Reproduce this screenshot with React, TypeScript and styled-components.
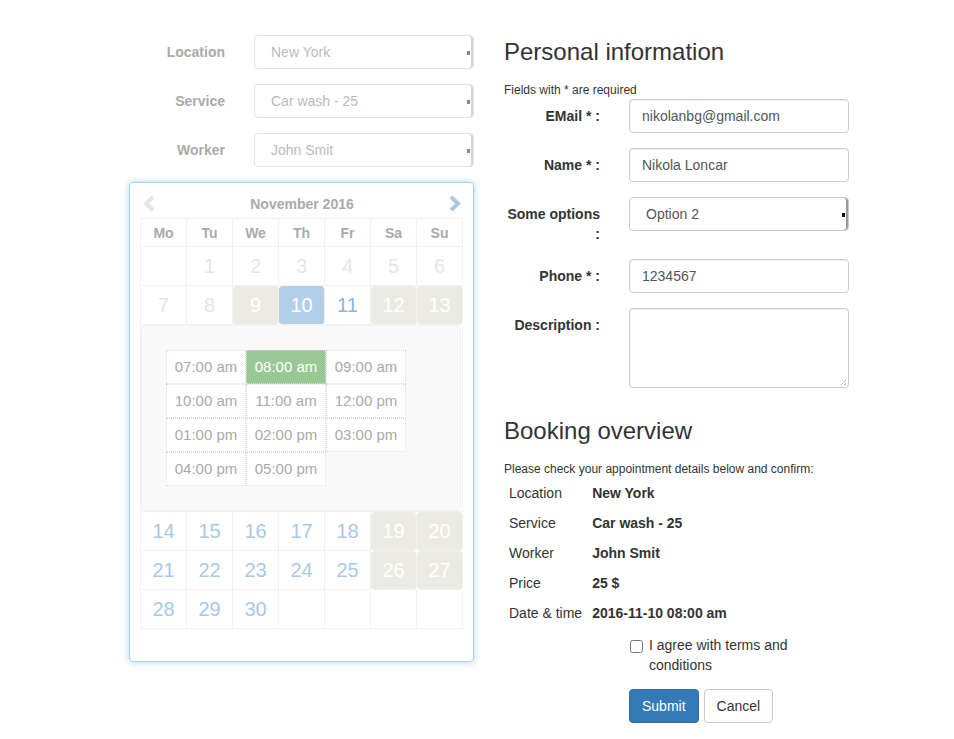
import React from 'react'
import styled, { createGlobalStyle } from 'styled-components'

const GlobalStyle = createGlobalStyle`
    body {
        margin: 0;
        background: #fff;
        font-family: "Liberation Sans", Arial, sans-serif;
        font-size: 14px;
        line-height: 20px;
        color: #333;
    }
`

const Page = styled.div`
    display: flex;
    gap: 30px;
    padding: 35px 0 0 129px;
`

const LeftColumn = styled.div`
    width: 345px;
    display: flex;
    flex-direction: column;
`

const RightColumn = styled.div`
    width: 345px;
    display: flex;
    flex-direction: column;
    align-items: flex-start;
`

const FieldRow = styled.div`
    display: grid;
    grid-template-columns: 96px 220px;
    column-gap: 29px;
    margin-bottom: 15px;
`

const FieldLabel = styled.label<{ $muted?: boolean }>`
    text-align: right;
    font-weight: bold;
    padding-top: 7px;
    color: ${({ $muted }) => ($muted ? '#aaa' : '#333')};
`

const SelectBox = styled.div<{ $muted?: boolean }>`
    position: relative;
    height: 34px;
    box-sizing: border-box;
    border: 1px solid ${({ $muted }) => ($muted ? '#e2e2e2' : '#ccc')};
    border-radius: 4px;
    padding: 6px 16px;
    color: ${({ $muted }) => ($muted ? '#bbb' : '#555')};
    box-shadow: inset -2px 0 0 ${({ $muted }) => ($muted ? '#d6d6d6' : '#999')};
    &::after {
        content: '';
        position: absolute;
        right: 3px;
        top: 15px;
        width: 3px;
        height: 4px;
        background: ${({ $muted }) => ($muted ? '#888' : '#111')};
    }
`

const TextInput = styled.div`
    height: 34px;
    box-sizing: border-box;
    border: 1px solid #ccc;
    border-radius: 4px;
    padding: 6px 12px;
    color: #555;
    box-shadow: inset 0 1px 1px rgba(0, 0, 0, 0.075);
`

const TextArea = styled.div`
    position: relative;
    height: 80px;
    box-sizing: border-box;
    border: 1px solid #ccc;
    border-radius: 4px;
    box-shadow: inset 0 1px 1px rgba(0, 0, 0, 0.075);
    &::after {
        content: '';
        position: absolute;
        right: 2px;
        bottom: 2px;
        width: 5px;
        height: 5px;
        background: linear-gradient(135deg, transparent 45%, #bbb 45%, #bbb 55%, transparent 55%, transparent 75%, #bbb 75%);
    }
`

const Calendar = styled.div`
    border: 1px solid #a9d1f3;
    border-radius: 4px;
    box-shadow: 0 0 7px rgba(102, 175, 233, 0.55);
    padding: 6px 10px 32px 10px;
`

const CalHeader = styled.div`
    height: 29px;
    display: flex;
    align-items: center;
    justify-content: space-between;
    padding: 0 1px 0 2px;
`

const CalTitle = styled.div`
    font-weight: bold;
    color: #aaa;
`

const DayGrid = styled.div`
    display: grid;
    grid-template-columns: repeat(7, 46px);
    border-top: 1px solid #f1f1f1;
    border-left: 1px solid #f1f1f1;
`

const DayName = styled.div`
    height: 28px;
    box-sizing: border-box;
    border-right: 1px solid #f1f1f1;
    border-bottom: 1px solid #f1f1f1;
    display: flex;
    align-items: center;
    justify-content: center;
    font-weight: bold;
    color: #aaa;
`

type DayKind = 'past' | 'off' | 'today' | 'next' | 'open' | 'empty'

const dayColors: Record<DayKind, { bg: string; fg: string }> = {
    past: { bg: 'transparent', fg: '#e6e6e6' },
    off: { bg: '#ecebe3', fg: '#fff' },
    today: { bg: '#b2cfea', fg: '#fff' },
    next: { bg: 'transparent', fg: '#8db5de' },
    open: { bg: 'transparent', fg: '#a9c9e8' },
    empty: { bg: 'transparent', fg: 'transparent' },
}

const DayCell = styled.div<{ $kind: DayKind }>`
    height: 39px;
    box-sizing: border-box;
    border-right: 1px solid #f1f1f1;
    border-bottom: 1px solid #f1f1f1;
    display: flex;
    align-items: center;
    justify-content: center;
    font-size: 20px;
    background: ${({ $kind }) => dayColors[$kind].bg};
    color: ${({ $kind }) => dayColors[$kind].fg};
    border-radius: ${({ $kind }) => ($kind === 'off' || $kind === 'today' ? '4px' : '0')};
`

const TimePanel = styled.div`
    grid-column: 1 / -1;
    border-right: 1px solid #f1f1f1;
    border-bottom: 1px solid #f1f1f1;
    padding: 0 1px 0 0;
`

const TimeBox = styled.div`
    height: 186px;
    box-sizing: border-box;
    background: #f9f9f9;
    border: 1px solid #f2f2f2;
    border-radius: 5px;
    padding: 24px 23px 24px 24px;
`

const TimeGrid = styled.div`
    display: grid;
    grid-template-columns: repeat(3, 80px);
`

const TimeSlot = styled.div<{ $active?: boolean }>`
    height: 34px;
    box-sizing: border-box;
    border: 1px dotted #dcdcdc;
    display: flex;
    align-items: center;
    justify-content: center;
    font-size: 15px;
    background: ${({ $active }) => ($active ? '#98c994' : '#fff')};
    color: ${({ $active }) => ($active ? '#fff' : '#aaa')};
`

const Heading = styled.h3`
    margin: 4px 0 17px;
    font-size: 24px;
    font-weight: normal;
    line-height: 26px;
    color: #333;
`

const SectionHeading = styled(Heading)`
    margin-top: 15px;
`

const SmallNote = styled.div`
    font-size: 12px;
    line-height: 17px;
`

const Overview = styled.table`
    border-collapse: collapse;
    td {
        padding: 5px;
        line-height: 20px;
        white-space: nowrap;
    }
    td + td {
        font-weight: bold;
    }
`

const AgreeRow = styled.label`
    display: flex;
    gap: 6px;
    margin: 7px 0 0 126px;
    width: 200px;
    input {
        margin: 5px 0 0 0;
        width: 13px;
        height: 13px;
        flex: none;
    }
`

const Actions = styled.div`
    display: flex;
    gap: 5px;
    margin: 14px 0 0 125px;
`

const Button = styled.button<{ $primary?: boolean }>`
    font-family: inherit;
    font-size: 14px;
    line-height: 20px;
    padding: 6px 12px;
    border-radius: 4px;
    border: 1px solid ${({ $primary }) => ($primary ? '#2e6da4' : '#ccc')};
    background: ${({ $primary }) => ($primary ? '#337ab7' : '#fff')};
    color: ${({ $primary }) => ($primary ? '#fff' : '#333')};
`

function Chevron({ dir, color }: { dir: 'left' | 'right'; color: string }) {
    const points = dir === 'left' ? '11,3 4,9.5 11,16' : '3,3 10,9.5 3,16'
    return (
        <svg width="14" height="19" viewBox="0 0 14 19">
            <polyline points={points} fill="none" stroke={color} strokeWidth="4" />
        </svg>
    )
}

const weekDays = ['Mo', 'Tu', 'We', 'Th', 'Fr', 'Sa', 'Su']

const topWeeks: [string, DayKind][][] = [
    [['', 'empty'], ['1', 'past'], ['2', 'past'], ['3', 'past'], ['4', 'past'], ['5', 'past'], ['6', 'past']],
    [['7', 'past'], ['8', 'past'], ['9', 'off'], ['10', 'today'], ['11', 'next'], ['12', 'off'], ['13', 'off']],
]

const bottomWeeks: [string, DayKind][][] = [
    [['14', 'open'], ['15', 'open'], ['16', 'open'], ['17', 'open'], ['18', 'open'], ['19', 'off'], ['20', 'off']],
    [['21', 'open'], ['22', 'open'], ['23', 'open'], ['24', 'open'], ['25', 'open'], ['26', 'off'], ['27', 'off']],
    [['28', 'open'], ['29', 'open'], ['30', 'open'], ['', 'empty'], ['', 'empty'], ['', 'empty'], ['', 'empty']],
]

const times = [
    '07:00 am', '08:00 am', '09:00 am',
    '10:00 am', '11:00 am', '12:00 pm',
    '01:00 pm', '02:00 pm', '03:00 pm',
    '04:00 pm', '05:00 pm',
]

const overview = [
    ['Location', 'New York'],
    ['Service', 'Car wash - 25'],
    ['Worker', 'John Smit'],
    ['Price', '25 $'],
    ['Date & time', '2016-11-10 08:00 am'],
]

function renderWeeks(weeks: [string, DayKind][][], key: string) {
    return weeks.flatMap((week, w) =>
        week.map(([label, kind], d) => (
            <DayCell key={`${key}-${w}-${d}`} $kind={kind}>
                {label}
            </DayCell>
        ))
    )
}

export default function App() {
    return (
        <>
            <GlobalStyle />
            <Page>
                <LeftColumn>
                    <FieldRow>
                        <FieldLabel $muted>Location</FieldLabel>
                        <SelectBox $muted>New York</SelectBox>
                    </FieldRow>
                    <FieldRow>
                        <FieldLabel $muted>Service</FieldLabel>
                        <SelectBox $muted>Car wash - 25</SelectBox>
                    </FieldRow>
                    <FieldRow>
                        <FieldLabel $muted>Worker</FieldLabel>
                        <SelectBox $muted>John Smit</SelectBox>
                    </FieldRow>

                    <Calendar>
                        <CalHeader>
                            <Chevron dir="left" color="#e6e6e6" />
                            <CalTitle>November 2016</CalTitle>
                            <Chevron dir="right" color="#a9c9e8" />
                        </CalHeader>
                        <DayGrid>
                            {weekDays.map(d => (
                                <DayName key={d}>{d}</DayName>
                            ))}
                            {renderWeeks(topWeeks, 'top')}
                            <TimePanel>
                                <TimeBox>
                                    <TimeGrid>
                                        {times.map(t => (
                                            <TimeSlot key={t} $active={t === '08:00 am'}>
                                                {t}
                                            </TimeSlot>
                                        ))}
                                    </TimeGrid>
                                </TimeBox>
                            </TimePanel>
                            {renderWeeks(bottomWeeks, 'bottom')}
                        </DayGrid>
                    </Calendar>
                </LeftColumn>

                <RightColumn>
                    <Heading>Personal information</Heading>
                    <SmallNote>Fields with * are required</SmallNote>
                    <FieldRow>
                        <FieldLabel>EMail * :</FieldLabel>
                        <TextInput>nikolanbg@gmail.com</TextInput>
                    </FieldRow>
                    <FieldRow>
                        <FieldLabel>Name * :</FieldLabel>
                        <TextInput>Nikola Loncar</TextInput>
                    </FieldRow>
                    <FieldRow>
                        <FieldLabel>Some options :</FieldLabel>
                        <SelectBox>Option 2</SelectBox>
                    </FieldRow>
                    <FieldRow>
                        <FieldLabel>Phone * :</FieldLabel>
                        <TextInput>1234567</TextInput>
                    </FieldRow>
                    <FieldRow>
                        <FieldLabel>Description :</FieldLabel>
                        <TextArea />
                    </FieldRow>

                    <SectionHeading>Booking overview</SectionHeading>
                    <SmallNote>Please check your appointment details below and confirm:</SmallNote>
                    <Overview>
                        <tbody>
                            {overview.map(([k, v]) => (
                                <tr key={k}>
                                    <td>{k}</td>
                                    <td>{v}</td>
                                </tr>
                            ))}
                        </tbody>
                    </Overview>
                    <AgreeRow>
                        <input type="checkbox" />
                        <span>I agree with terms and conditions</span>
                    </AgreeRow>
                    <Actions>
                        <Button $primary>Submit</Button>
                        <Button>Cancel</Button>
                    </Actions>
                </RightColumn>
            </Page>
        </>
    )
}
